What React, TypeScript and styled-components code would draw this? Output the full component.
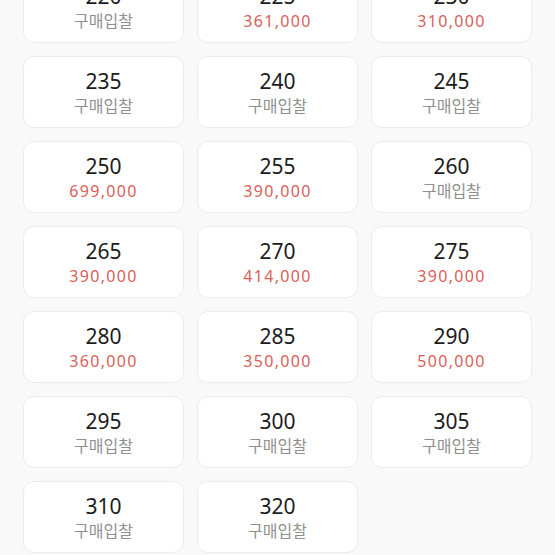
import styled, { createGlobalStyle } from "styled-components";

const GlobalStyle = createGlobalStyle`
html, body {
  margin: 0;
  padding: 0;
  background: #f9f9f9;
  overflow: hidden;
  font-family: "Noto Sans", "Noto Sans CJK KR", sans-serif;
}
`;

const Page = styled.div`
width: 555px;
height: 555px;
overflow: hidden;
background: #f9f9f9;
`;

const SizeGrid = styled.ul`
list-style: none;
margin: -29px 0 0;
padding: 0 24px 0 23px;
display: grid;
grid-template-columns: repeat(3, 161px);
column-gap: 13px;
row-gap: 13px;
`;

const SizeCard = styled.li`
height: 72px;
box-sizing: border-box;
background: #fff;
border: 1px solid #ececec;
border-radius: 11px;
display: flex;
flex-direction: column;
align-items: center;
justify-content: center;
padding-top: 2px;
`;

const Size = styled.span`
font-size: 21px;
line-height: 25px;
color: #1c1c1c;
`;

const Price = styled.span<{ $bid: boolean }>`
font-size: 16px;
line-height: 22px;
margin-top: 1px;
letter-spacing: ${(props) => (props.$bid ? "0" : "1.3px")};
color: ${(props) => (props.$bid ? "#8f8f8f" : "#d9605a")};
`;

const sizes: [string, string | null][] = [
  ["220", null],
  ["225", "361,000"],
  ["230", "310,000"],
  ["235", null],
  ["240", null],
  ["245", null],
  ["250", "699,000"],
  ["255", "390,000"],
  ["260", null],
  ["265", "390,000"],
  ["270", "414,000"],
  ["275", "390,000"],
  ["280", "360,000"],
  ["285", "350,000"],
  ["290", "500,000"],
  ["295", null],
  ["300", null],
  ["305", null],
  ["310", null],
  ["320", null],
];

export default function App() {
  return (
    <Page>
      <GlobalStyle />
      <SizeGrid>
        {sizes.map(([size, price]) => (
          <SizeCard key={size}>
            <Size>{size}</Size>
            <Price $bid={!price}>{price ?? "구매입찰"}</Price>
          </SizeCard>
        ))}
      </SizeGrid>
    </Page>
  );
}
